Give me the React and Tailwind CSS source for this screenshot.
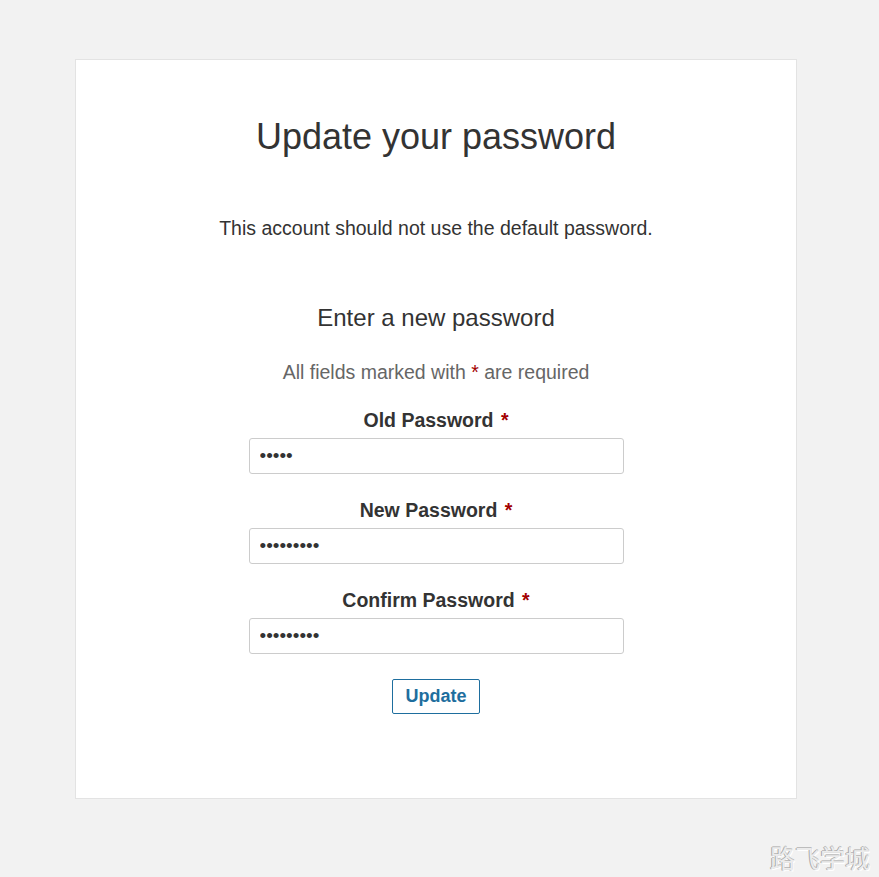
import React from "react";

function Field({ label, dots }) {
  return (
    <div className="flex flex-col items-center">
      <label className="text-[19.5px] leading-[24px] font-bold text-[#333]">
        {label} <span className="text-[#a30000] ml-[2px]">*</span>
      </label>
      <input
        type="password"
        readOnly
        defaultValue={dots}
        className="mt-[6px] w-[375px] h-[36px] border border-[#ccc] rounded-[3px] px-[10px] text-[19px] text-[#333] bg-white outline-none"
        style={{ fontFamily: '"Liberation Sans", Arial, sans-serif' }}
      />
    </div>
  );
}

export default function App() {
  return (
    <div
      className="relative min-h-[877px] w-full bg-[#f2f2f2] pt-[59px] pl-[75px]"
      style={{ fontFamily: '"Liberation Sans", Arial, sans-serif' }}
    >
      <div className="w-[722px] h-[740px] bg-white border border-[#e3e3e3] flex flex-col items-center pt-[57px] text-[#333]">
        <h1 className="text-[36px] leading-[40px] font-normal text-[#333]">Update your password</h1>
        <p className="mt-[59px] text-[19.5px] leading-[24px] text-[#333]">
          This account should not use the default password.
        </p>
        <h2 className="mt-[62px] text-[24px] leading-[32px] font-normal text-[#333]">Enter a new password</h2>
        <p className="mt-[26px] text-[19.5px] leading-[24px] text-[#666]">
          All fields marked with <span className="text-[#a30000]">*</span> are required
        </p>
        <div className="mt-[24px] flex flex-col gap-[24px]">
          <Field label="Old Password" dots="12345" />
          <Field label="New Password" dots="123456789" />
          <Field label="Confirm Password" dots="123456789" />
        </div>
        <button className="mt-[25px] w-[88px] h-[35px] border border-[#1e6e9e] rounded-[2px] text-[18px] font-bold text-[#1e6e9e] bg-white">
          Update
        </button>
      </div>
      <div
        className="absolute right-[9px] bottom-[5px] text-[25px] leading-[30px] text-[#ececec]"
        style={{
          fontFamily: '"Noto Sans CJK SC", sans-serif',
          textShadow: "-1px 0 0 #a8a8a8, 0 -1px 0 #bdbdbd, 1px 1px 0 #ffffff",
        }}
      >
        路飞学城
      </div>
    </div>
  );
}
